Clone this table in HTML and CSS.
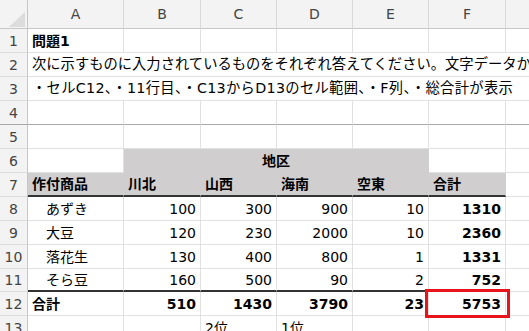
FILE: index.html
```html
<!DOCTYPE html>
<html lang="ja">
<head>
<meta charset="utf-8">
<link rel="stylesheet" href="styles.css">
</head>
<body>
<div class="sheet">
  <div class="corner"><svg width="28" height="29" viewBox="0 0 28 29"><polygon points="25,12 25,27 9,27" fill="#dcdcdc"/></svg></div>
  <div class="ch">A</div><div class="ch">B</div><div class="ch">C</div><div class="ch">D</div><div class="ch">E</div><div class="ch">F</div><div class="ch"></div>

  <div class="rh">1</div>
  <div class="c b">問題1</div><div class="c"></div><div class="c"></div><div class="c"></div><div class="c"></div><div class="c"></div><div class="c"></div>

  <div class="rh">2</div>
  <div class="c span7 wide">次に示すものに入力されているものをそれぞれ答えてください。文字データか</div>

  <div class="rh">3</div>
  <div class="c span7 wider">・セルC12、・11行目、・C13からD13のセル範囲、・F列、・総合計が表示</div>

  <div class="rh frz">4</div>
  <div class="c frz"></div><div class="c frz"></div><div class="c frz"></div><div class="c frz"></div><div class="c frz"></div><div class="c frz"></div><div class="c frz"></div>

  <div class="rh">5</div>
  <div class="c"></div><div class="c"></div><div class="c"></div><div class="c"></div><div class="c"></div><div class="c"></div><div class="c"></div>

  <div class="rh">6</div>
  <div class="c"></div><div class="c fill b span4 center">地区</div><div class="c"></div><div class="c"></div>

  <div class="rh">7</div>
  <div class="c fill b thick">作付商品</div><div class="c fill b thick">川北</div><div class="c fill b thick">山西</div><div class="c fill b thick">海南</div><div class="c fill b thick">空東</div><div class="c fill b thick">合計</div><div class="c"></div>

  <div class="rh">8</div>
  <div class="c ind">あずき</div><div class="c n">100</div><div class="c n">300</div><div class="c n">900</div><div class="c n">10</div><div class="c n b">1310</div><div class="c"></div>

  <div class="rh">9</div>
  <div class="c ind">大豆</div><div class="c n">120</div><div class="c n">230</div><div class="c n">2000</div><div class="c n">10</div><div class="c n b">2360</div><div class="c"></div>

  <div class="rh">10</div>
  <div class="c ind">落花生</div><div class="c n">130</div><div class="c n">400</div><div class="c n">800</div><div class="c n">1</div><div class="c n b">1331</div><div class="c"></div>

  <div class="rh">11</div>
  <div class="c ind thick">そら豆</div><div class="c n thick">160</div><div class="c n thick">500</div><div class="c n thick">90</div><div class="c n thick">2</div><div class="c n b thick">752</div><div class="c"></div>

  <div class="rh">12</div>
  <div class="c b">合計</div><div class="c n b">510</div><div class="c n b">1430</div><div class="c n b">3790</div><div class="c n b">23</div><div class="c n b mark">5753</div><div class="c"></div>

  <div class="rh">13</div>
  <div class="c"></div><div class="c"></div><div class="c">2位</div><div class="c">1位</div><div class="c"></div><div class="c"></div><div class="c"></div>
</div>
</body>
</html>
```
FILE: styles.css
```css
html, body {
  margin: 0;
  padding: 0;
  background: #fff;
  overflow: hidden;
}

.sheet {
  display: grid;
  grid-template-columns: 28px 96px 77px 76px 76px 76px 77px 100px;
  grid-template-rows: 29px 24px 24px 24px 24px 24px 24px 24px 24px 24px 24px 23px 24px 24px;
  font-family: "DejaVu Sans", "Noto Sans CJK JP", sans-serif;
  font-size: 14px;
  color: #000;
}

.corner {
  background: #f3f3f3;
  border-right: 1px solid #c6c6c6;
  border-bottom: 1px solid #c6c6c6;
  box-sizing: border-box;
}
.corner svg { display: block; }

.ch, .rh, .c {
  box-sizing: border-box;
  display: flex;
  align-items: center;
  white-space: nowrap;
  overflow: hidden;
  line-height: 1;
}

.ch {
  background: #f3f3f3;
  color: #444;
  justify-content: center;
  border-right: 1px solid #d9d9d9;
  border-bottom: 1px solid #c6c6c6;
}

.rh {
  background: #f3f3f3;
  color: #444;
  justify-content: center;
  border-right: 1px solid #c6c6c6;
  border-bottom: 1px solid #dcdcdc;
}

.c {
  padding: 0 4px;
  border-right: 1px solid #e1e1e1;
  border-bottom: 1px solid #e1e1e1;
}

.span7 { grid-column: span 7; border-right: none; }
.span4 { grid-column: span 4; }
.wide { font-size: 14.3px; }
.wider { font-size: 14.3px; letter-spacing: 0.3px; }
.center { justify-content: center; }
.n { justify-content: flex-end; padding-right: 4px; }
.b { font-weight: bold; }
.ind { padding-left: 18px; }

.fill {
  background: #d0cece;
  border-right-color: #d0cece;
  border-bottom-color: #d0cece;
}

.thick { border-bottom: 2px solid #333; }
.frz { border-bottom: 1px solid #a8a8a8; }

.mark {
  position: relative;
  overflow: visible;
}
.mark::after {
  content: "";
  position: absolute;
  left: -4px;
  right: -5px;
  top: -3px;
  bottom: -3px;
  border: 3px solid #e8141b;
}
```
